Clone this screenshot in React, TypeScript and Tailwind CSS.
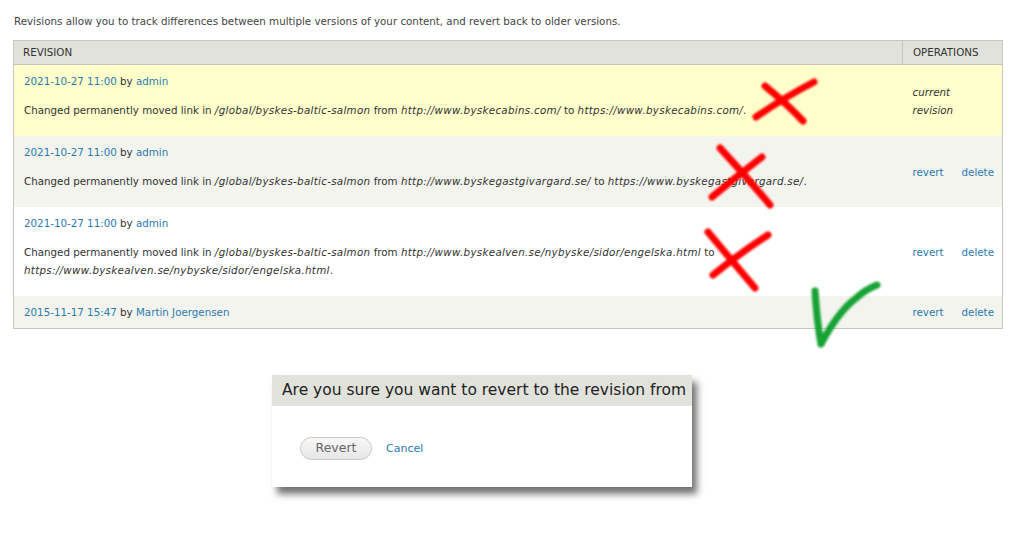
import React from "react"

const link = "text-[#2a7ab0]"

type Rev = {
  date: string
  author: string
  from?: string
  to?: string
  wrapTo?: boolean
  bg: string
  current?: boolean
}

const revisions: Rev[] = [
  {
    date: "2021-10-27 11:00",
    author: "admin",
    from: "http://www.byskecabins.com/",
    to: "https://www.byskecabins.com/",
    bg: "bg-[#ffffcc]",
    current: true,
  },
  {
    date: "2021-10-27 11:00",
    author: "admin",
    from: "http://www.byskegastgivargard.se/",
    to: "https://www.byskegastgivargard.se/",
    bg: "bg-[#f3f4ee]",
  },
  {
    date: "2021-10-27 11:00",
    author: "admin",
    from: "http://www.byskealven.se/nybyske/sidor/engelska.html",
    to: "https://www.byskealven.se/nybyske/sidor/engelska.html",
    wrapTo: true,
    bg: "bg-white",
  },
  {
    date: "2015-11-17 15:47",
    author: "Martin Joergensen",
    bg: "bg-[#f3f4ee]",
  },
]

function Marks() {
  return (
    <svg
      className="absolute left-0 top-0 pointer-events-none"
      width="1024"
      height="535"
      viewBox="0 0 1024 535"
    >
      <defs>
        <filter id="soft" x="-10%" y="-10%" width="120%" height="120%">
          <feGaussianBlur stdDeviation="0.9" />
        </filter>
      </defs>
      <g filter="url(#soft)" fill="none" strokeLinecap="round" strokeLinejoin="round">
        <g stroke="#ff0000" strokeWidth="7">
          <path d="M756 117 Q785 97 814 82" />
          <path d="M765 86 Q786 103 803 121" />
          <path d="M720 148 Q746 176 770 205" />
          <path d="M762 157 Q737 176 712 197" />
          <path d="M708 232 Q733 262 755 288" />
          <path d="M768 235 Q740 253 713 275" />
        </g>
        <path
          d="M815 291 Q817 322 821 344 Q838 312 855 299 Q866 289 877 285"
          stroke="#16a235"
          strokeWidth="7"
        />
      </g>
    </svg>
  )
}

export default function App() {
  return (
    <div className="relative w-[1024px] h-[535px] overflow-hidden bg-white font-['DejaVu_Sans',sans-serif] text-[10.3px] text-[#333]">
      <p className="pl-[14px] pt-[14px] leading-[14px] text-[#444]">
        Revisions allow you to track differences between multiple versions of your content, and revert back to older versions.
      </p>

      <table className="ml-[13px] mt-[12px] w-[990px] border border-[#c6c6c0] border-collapse">
        <thead>
          <tr className="bg-[#e1e2dc] h-[24px] text-left">
            <th className="font-normal pl-[9px] border-b border-[#c6c6c0]">REVISION</th>
            <th className="font-normal pl-[10px] w-[100px] border-b border-l border-[#c6c6c0]">OPERATIONS</th>
          </tr>
        </thead>
        <tbody>
          {revisions.map((r, i) => (
            <tr key={i} className={r.bg}>
              <td className="pl-[10px] pr-[10px] py-[7px] align-top">
                <div className="leading-[18px]">
                  <span className={link}>{r.date}</span> by <span className={link}>{r.author}</span>
                </div>
                {r.from && (
                  <p className="mt-[11px] mb-[10px] leading-[18px]">
                    Changed permanently moved link in <i className="tracking-[0.3px]">/global/byskes-baltic-salmon</i> from{" "}
                    <i className="tracking-[0.3px]">{r.from}</i> to
                    {r.wrapTo ? <br /> : " "}
                    <i className="tracking-[0.3px]">{r.to}</i>.
                  </p>
                )}
              </td>
              <td className="pl-[10px] align-middle leading-[18px]">
                {r.current ? (
                  <i>
                    current
                    <br />
                    revision
                  </i>
                ) : (
                  <div className="flex gap-[18px]">
                    <span className={link}>revert</span>
                    <span className={link}>delete</span>
                  </div>
                )}
              </td>
            </tr>
          ))}
        </tbody>
      </table>

      <div className="ml-[272px] mt-[46px] w-[420px] bg-white shadow-[5px_7px_7px_rgba(0,0,0,0.55)]">
        <div className="bg-[#e1e2dc] h-[31px] pl-[10px] flex items-center whitespace-nowrap overflow-hidden text-[15.5px] text-[#222]">
          Are you sure you want to revert to the revision from
        </div>
        <div className="h-[81px] flex items-start pt-[31px] pl-[28px] gap-[14px]">
          <button className="w-[72px] h-[23px] rounded-full border border-[#c8c8c8] bg-gradient-to-b from-[#f8f8f8] to-[#e6e6e6] text-[12.5px] text-[#666]">
            Revert
          </button>
          <span className={`${link} text-[11px] leading-[23px]`}>Cancel</span>
        </div>
      </div>

      <Marks />
    </div>
  )
}
